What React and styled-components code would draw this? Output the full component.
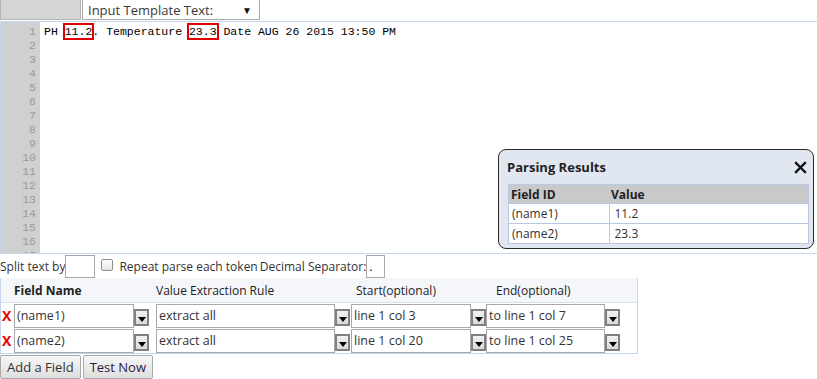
import styled, { createGlobalStyle } from "styled-components";

const GlobalStyle = createGlobalStyle`
  body {
    margin: 0;
    font-family: "Open Sans", "Noto Sans", sans-serif;
    font-size: 12px;
    color: #333;
    background: #fff;
  }
`

const lineCount = 17
const fields = [
  { name: "(name1)", rule: "extract all", start: "line 1 col 3", end: "to line 1 col 7" },
  { name: "(name2)", rule: "extract all", start: "line 1 col 20", end: "to line 1 col 25" },
]
const results = [
  { id: "(name1)", value: "11.2" },
  { id: "(name2)", value: "23.3" },
]

const App = () => {
  return (
    <Page>
      <GlobalStyle />
      <TopBar>
        <GrayButton />
        <TemplateSelect>
          <span>Input Template Text:</span>
          <Caret>▼</Caret>
        </TemplateSelect>
      </TopBar>

      <Editor>
        <Gutter>
          {Array.from({ length: lineCount }, (_, i) => (
            <LineNo key={i}>{i + 1}</LineNo>
          ))}
        </Gutter>
        <Code>
          <CodeLine>
            PH <Mark>11.2</Mark>. Temperature <Mark>23.3</Mark> Date AUG 26 2015 13:50 PM
          </CodeLine>
        </Code>

        <ResultsPanel>
          <PanelHead>
            <PanelTitle>Parsing Results</PanelTitle>
            <CloseIcon width="13" height="13" viewBox="0 0 13 13">
              <path d="M2 2 L11 11 M11 2 L2 11" stroke="#111" strokeWidth="2.4" strokeLinecap="square" />
            </CloseIcon>
          </PanelHead>
          <ResultTable>
            <thead>
              <tr>
                <ResultTh $w={96}>Field ID</ResultTh>
                <ResultTh>Value</ResultTh>
              </tr>
            </thead>
            <tbody>
              {results.map((r) => (
                <tr key={r.id}>
                  <ResultTd>{r.id}</ResultTd>
                  <ResultTd>{r.value}</ResultTd>
                </tr>
              ))}
            </tbody>
          </ResultTable>
        </ResultsPanel>
      </Editor>

      <OptionsRow>
        <span>Split text by</span>
        <SmallInput $w={30} />
        <Check />
        <span>Repeat parse each token</span>
        <span>Decimal Separator:</span>
        <SmallInput $w={19} defaultValue="." />
      </OptionsRow>

      <FieldsTable>
        <HeadRow>
          <span />
          <HeadCell>Field Name</HeadCell>
          <HeadCell $light>Value Extraction Rule</HeadCell>
          <HeadCell $light $indent={5}>Start(optional)</HeadCell>
          <HeadCell $light $indent={10}>End(optional)</HeadCell>
        </HeadRow>
        {fields.map((f) => (
          <FieldRow key={f.name}>
            <Remove>X</Remove>
            <Combo value={f.name} w={120} />
            <Combo value={f.rule} w={179} />
            <Combo value={f.start} w={120} />
            <Combo value={f.end} w={119} />
          </FieldRow>
        ))}
      </FieldsTable>

      <Actions>
        <ActionButton>Add a Field</ActionButton>
        <ActionButton $dark>Test Now</ActionButton>
      </Actions>
    </Page>
  )
}

const Combo = ({ value, w }) => (
  <ComboWrap>
    <ComboInput $w={w}>{value}</ComboInput>
    <DropButton>
      <svg width="8" height="5" viewBox="0 0 8 5">
        <path d="M0 0 H8 L4 5 Z" fill="#000" />
      </svg>
    </DropButton>
  </ComboWrap>
)

const Page = styled.div`
  width: 817px;
`
const TopBar = styled.div`
  display: flex;
  height: 21px;
  border-bottom: 1px solid #c6d6ef;
`
const GrayButton = styled.div`
  width: 79px;
  height: 19px;
  background: #d5d5d5;
  border: 1px solid #b4b4b4;
  border-top: none;
`
const TemplateSelect = styled.div`
  box-sizing: border-box;
  width: 178px;
  height: 20px;
  margin-left: 1px;
  border: 1px solid #a9a9a9;
  border-top: none;
  display: flex;
  align-items: center;
  justify-content: space-between;
  padding: 0 7px 0 5px;
  font-size: 13px;
  color: #3a3a3a;
`
const Caret = styled.span`
  font-size: 10px;
  color: #111;
`
const Editor = styled.div`
  position: relative;
  display: flex;
  height: 231px;
  border-left: 1px solid #c6d6ef;
  border-bottom: 1px solid #c6d6ef;
  overflow: hidden;
`
const Gutter = styled.div`
  width: 39px;
  background: #d0d0d0;
  padding-top: 3px;
  overflow: hidden;
  flex-shrink: 0;
`
const LineNo = styled.div`
  height: 14px;
  line-height: 14px;
  text-align: right;
  padding-right: 4px;
  font-family: "Liberation Mono", monospace;
  font-size: 11.5px;
  color: #999;
`
const Code = styled.div`
  flex: 1;
  padding: 3px 0 0 4px;
`
const CodeLine = styled.div`
  height: 14px;
  line-height: 14px;
  font-family: "Liberation Mono", monospace;
  font-size: 11.5px;
  color: #000;
  white-space: pre;
`
const Mark = styled.span`
  outline: 2px solid #e00000;
  outline-offset: 0px;
`
const ResultsPanel = styled.div`
  position: absolute;
  left: 497px;
  top: 127px;
  width: 316px;
  height: 100px;
  border: 1px solid #2a2a2a;
  border-radius: 8px;
  background: #e1e7f0;
  padding: 0 6px 0 8px;
  box-sizing: border-box;
`
const PanelHead = styled.div`
  display: flex;
  align-items: center;
  justify-content: space-between;
  height: 34px;
`
const PanelTitle = styled.span`
  font-weight: bold;
  font-size: 13px;
  color: #222;
`
const CloseIcon = styled.svg`
  display: block;
`
const ResultTable = styled.table`
  width: 301px;
  margin-left: 1px;
  border-collapse: collapse;
  background: #fff;
  border: 1px solid #b9c9e3;
`
const ResultTh = styled.th`
  text-align: left;
  background: #c9c9c9;
  height: 18px;
  padding: 0 2px;
  font-size: 12px;
  color: #222;
  width: ${(p) => (p.$w ? `${p.$w}px` : "auto")};
`
const ResultTd = styled.td`
  height: 19px;
  padding: 0 3px;
  border: 1px solid #b9c9e3;
  font-size: 12px;
  color: #333;
  &:nth-child(2) {
    padding-left: 5px;
  }
`
const OptionsRow = styled.div`
  display: flex;
  align-items: center;
  height: 23px;
  padding-top: 1px;
  font-size: 12px;
  color: #333;
  & > span + span {
    margin-left: 2px;
  }
`
const SmallInput = styled.input`
  box-sizing: border-box;
  width: ${(p) => p.$w}px;
  height: 23px;
  border: 1px solid #a9a9a9;
  margin: 0;
  padding: 0 2px;
  font-size: 12px;
  font-family: inherit;
`
const Check = styled.span`
  display: inline-block;
  width: 10px;
  height: 10px;
  border: 1px solid #8f8f8f;
  border-radius: 2px;
  background: linear-gradient(#fdfdfd, #e6e6e6);
  margin: 0 4px 4px 6px;
`
const FieldsTable = styled.div`
  width: 636px;
  border: 1px solid #c6d6ef;
  border-top: none;
`
const cols = "13px 142px 195px 135px 1fr"
const HeadRow = styled.div`
  display: grid;
  grid-template-columns: ${cols};
  align-items: center;
  height: 24px;
  background: #f4f6fa;
  border-bottom: 1px solid #d6e0f0;
`
const HeadCell = styled.span`
  padding-left: ${(p) => p.$indent || 0}px;
  font-weight: ${(p) => (p.$light ? "normal" : "bold")};
  font-size: 12px;
  color: #222;
`
const FieldRow = styled.div`
  display: grid;
  grid-template-columns: ${cols};
  align-items: center;
  height: 25px;
`
const Remove = styled.span`
  color: #ee0000;
  font-weight: bold;
  font-size: 14px;
  padding-left: 1px;
`
const ComboWrap = styled.div`
  display: flex;
  align-items: center;
`
const ComboInput = styled.div`
  box-sizing: border-box;
  width: ${(p) => p.$w}px;
  height: 24px;
  line-height: 22px;
  border: 1px solid #a9a9a9;
  padding-left: 2px;
  font-size: 12.5px;
  color: #333;
  white-space: nowrap;
  overflow: hidden;
`
const DropButton = styled.div`
  box-sizing: border-box;
  width: 15px;
  height: 17px;
  margin-top: 3px;
  border: 2px solid #808080;
  background: linear-gradient(#f2f2f2, #d9d9d9);
  display: flex;
  align-items: flex-end;
  justify-content: center;
  padding-bottom: 2px;
`
const Actions = styled.div`
  display: flex;
  gap: 2px;
  padding-top: 1px;
`
const ActionButton = styled.button`
  height: 24px;
  padding: 0 6px;
  border: 1px solid #a9a9a9;
  border-radius: 2px;
  background: linear-gradient(#f7f7f7, #dedede);
  font-family: inherit;
  font-size: 13px;
  color: ${(p) => (p.$dark ? "#2d1a3a" : "#333")};
`

export default App
